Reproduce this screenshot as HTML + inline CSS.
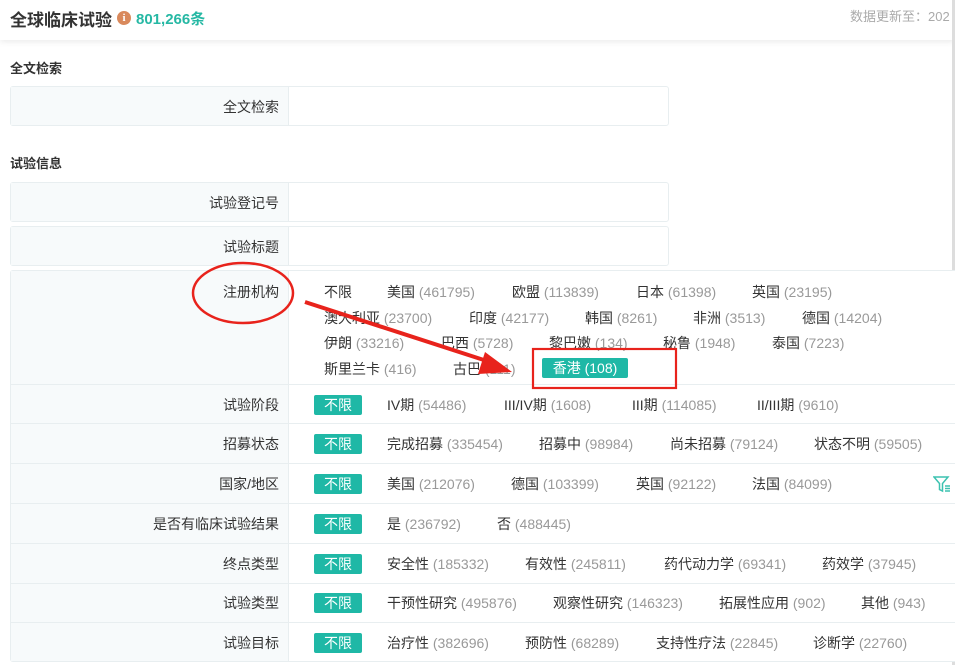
<!DOCTYPE html>
<html><head><meta charset="utf-8"><style>
*{margin:0;padding:0;box-sizing:border-box}
body{width:955px;height:665px;overflow:hidden;background:#fff;font-family:"Liberation Sans","Noto Sans CJK SC",sans-serif;color:#333;position:relative;font-size:14px}
.a{position:absolute;white-space:nowrap}
.hdr{position:absolute;left:0;top:0;width:955px;height:40px;background:#fff;box-shadow:0 2px 6px rgba(0,0,0,0.08)}
.box{position:absolute;border:1px solid #e8eef0;border-radius:3px;background:#fff}
.lab{position:absolute;left:0;top:0;bottom:0;width:278px;background:#f7fafb;border-right:1px solid #e8eef0}
.lt{position:absolute;right:676px;font-size:14px;color:#333;text-align:right}
.n{color:#999}
.bd{position:absolute;background:#1fb8a6;color:#fff;border-radius:2px;height:20px;line-height:20px;text-align:center;font-size:14px}
.sep{position:absolute;left:10px;width:945px;height:1px;background:#e8eef0}
</style></head><body>
<div class="hdr"></div>
<div class="a" style="left:10px;top:6px;font-size:17px;font-weight:bold;color:#333">全球临床试验</div>
<div class="a" style="left:117px;top:11px;width:14px;height:14px;border-radius:50%;background:#d9895c;color:#fff;font-size:11px;font-weight:bold;text-align:center;line-height:14px;font-family:'Liberation Serif',serif">i</div>
<div class="a" style="left:136px;top:8px;font-size:15px;font-weight:bold;color:#26b8a4">801,266条</div>
<div class="a" style="left:850px;top:6px;font-size:13px;color:#aaa">数据更新至：202</div>
<div class="a" style="left:952px;top:0;width:3px;height:665px;background:#ddd"></div>

<div class="a" style="left:10px;top:58px;font-size:13px;font-weight:bold">全文检索</div>
<div class="box" style="left:10px;top:86px;width:659px;height:40px"><div class="lab"></div></div>
<div class="a lt" style="top:97px">全文检索</div>

<div class="a" style="left:10px;top:153px;font-size:13px;font-weight:bold">试验信息</div>
<div class="box" style="left:10px;top:182px;width:659px;height:40px"><div class="lab"></div></div>
<div class="a lt" style="top:193px">试验登记号</div>
<div class="box" style="left:10px;top:226px;width:659px;height:40px"><div class="lab"></div></div>
<div class="a lt" style="top:237px">试验标题</div>

<div class="box" style="left:10px;top:270px;width:950px;height:392px;border-right:none"><div class="lab"></div></div>
<div class="sep" style="top:384px"></div>
<div class="sep" style="top:423px"></div>
<div class="sep" style="top:463px"></div>
<div class="sep" style="top:503px"></div>
<div class="sep" style="top:543px"></div>
<div class="sep" style="top:583px"></div>
<div class="sep" style="top:622px"></div>

<div class="a lt" style="top:282px">注册机构</div>
<div class="a" style="left:324px;top:282px">不限</div>
<div class="a" style="left:387px;top:282px">美国 <span class="n">(461795)</span></div>
<div class="a" style="left:512px;top:282px">欧盟 <span class="n">(113839)</span></div>
<div class="a" style="left:636px;top:282px">日本 <span class="n">(61398)</span></div>
<div class="a" style="left:752px;top:282px">英国 <span class="n">(23195)</span></div>
<div class="a" style="left:324px;top:308px">澳大利亚 <span class="n">(23700)</span></div>
<div class="a" style="left:469px;top:308px">印度 <span class="n">(42177)</span></div>
<div class="a" style="left:585px;top:308px">韩国 <span class="n">(8261)</span></div>
<div class="a" style="left:693px;top:308px">非洲 <span class="n">(3513)</span></div>
<div class="a" style="left:802px;top:308px">德国 <span class="n">(14204)</span></div>
<div class="a" style="left:324px;top:333px">伊朗 <span class="n">(33216)</span></div>
<div class="a" style="left:441px;top:333px">巴西 <span class="n">(5728)</span></div>
<div class="a" style="left:549px;top:333px">黎巴嫩 <span class="n">(134)</span></div>
<div class="a" style="left:663px;top:333px">秘鲁 <span class="n">(1948)</span></div>
<div class="a" style="left:772px;top:333px">泰国 <span class="n">(7223)</span></div>
<div class="a" style="left:324px;top:359px">斯里兰卡 <span class="n">(416)</span></div>
<div class="a" style="left:453px;top:359px">古巴 <span class="n">(111)</span></div>
<div class="bd" style="left:542px;top:358px;width:86px">香港 (108)</div>

<div class="a lt" style="top:395px">试验阶段</div>
<div class="bd" style="left:314px;top:395px;width:48px">不限</div>
<div class="a" style="left:387px;top:395px">IV期 <span class="n">(54486)</span></div>
<div class="a" style="left:504px;top:395px">III/IV期 <span class="n">(1608)</span></div>
<div class="a" style="left:632px;top:395px">III期 <span class="n">(114085)</span></div>
<div class="a" style="left:757px;top:395px">II/III期 <span class="n">(9610)</span></div>

<div class="a lt" style="top:434px">招募状态</div>
<div class="bd" style="left:314px;top:434px;width:48px">不限</div>
<div class="a" style="left:387px;top:434px">完成招募 <span class="n">(335454)</span></div>
<div class="a" style="left:539px;top:434px">招募中 <span class="n">(98984)</span></div>
<div class="a" style="left:670px;top:434px">尚未招募 <span class="n">(79124)</span></div>
<div class="a" style="left:814px;top:434px">状态不明 <span class="n">(59505)</span></div>

<div class="a lt" style="top:474px">国家/地区</div>
<div class="bd" style="left:314px;top:474px;width:48px">不限</div>
<div class="a" style="left:387px;top:474px">美国 <span class="n">(212076)</span></div>
<div class="a" style="left:511px;top:474px">德国 <span class="n">(103399)</span></div>
<div class="a" style="left:636px;top:474px">英国 <span class="n">(92122)</span></div>
<div class="a" style="left:752px;top:474px">法国 <span class="n">(84099)</span></div>
<svg class="a" style="left:933px;top:475px" width="18" height="18" viewBox="0 0 18 18" fill="none" stroke="#3cc2b0" stroke-width="1.5"><path d="M1 2h14l-5.5 6.5V16l-3-1.5V8.5Z"/><path d="M12 11h5M12 13.5h5M12 16h5"/></svg>

<div class="a lt" style="top:514px">是否有临床试验结果</div>
<div class="bd" style="left:314px;top:514px;width:48px">不限</div>
<div class="a" style="left:387px;top:514px">是 <span class="n">(236792)</span></div>
<div class="a" style="left:497px;top:514px">否 <span class="n">(488445)</span></div>

<div class="a lt" style="top:554px">终点类型</div>
<div class="bd" style="left:314px;top:554px;width:48px">不限</div>
<div class="a" style="left:387px;top:554px">安全性 <span class="n">(185332)</span></div>
<div class="a" style="left:525px;top:554px">有效性 <span class="n">(245811)</span></div>
<div class="a" style="left:664px;top:554px">药代动力学 <span class="n">(69341)</span></div>
<div class="a" style="left:822px;top:554px">药效学 <span class="n">(37945)</span></div>

<div class="a lt" style="top:593px">试验类型</div>
<div class="bd" style="left:314px;top:593px;width:48px">不限</div>
<div class="a" style="left:387px;top:593px">干预性研究 <span class="n">(495876)</span></div>
<div class="a" style="left:553px;top:593px">观察性研究 <span class="n">(146323)</span></div>
<div class="a" style="left:719px;top:593px">拓展性应用 <span class="n">(902)</span></div>
<div class="a" style="left:861px;top:593px">其他 <span class="n">(943)</span></div>

<div class="a lt" style="top:633px">试验目标</div>
<div class="bd" style="left:314px;top:633px;width:48px">不限</div>
<div class="a" style="left:387px;top:633px">治疗性 <span class="n">(382696)</span></div>
<div class="a" style="left:525px;top:633px">预防性 <span class="n">(68289)</span></div>
<div class="a" style="left:656px;top:633px">支持性疗法 <span class="n">(22845)</span></div>
<div class="a" style="left:813px;top:633px">诊断学 <span class="n">(22760)</span></div>

<svg class="a" style="left:0;top:0" width="955" height="665" fill="none" stroke="#e8231c" stroke-width="2.5">
<ellipse cx="243" cy="293" rx="50" ry="30"/>
<rect x="533" y="349" width="143" height="39" stroke-width="2.2"/>
<path d="M305 302L490 362" stroke-width="4"/>
<path d="M512 372L485 352L478 374Z" fill="#e8231c" stroke="none"/>
</svg>
</body></html>
